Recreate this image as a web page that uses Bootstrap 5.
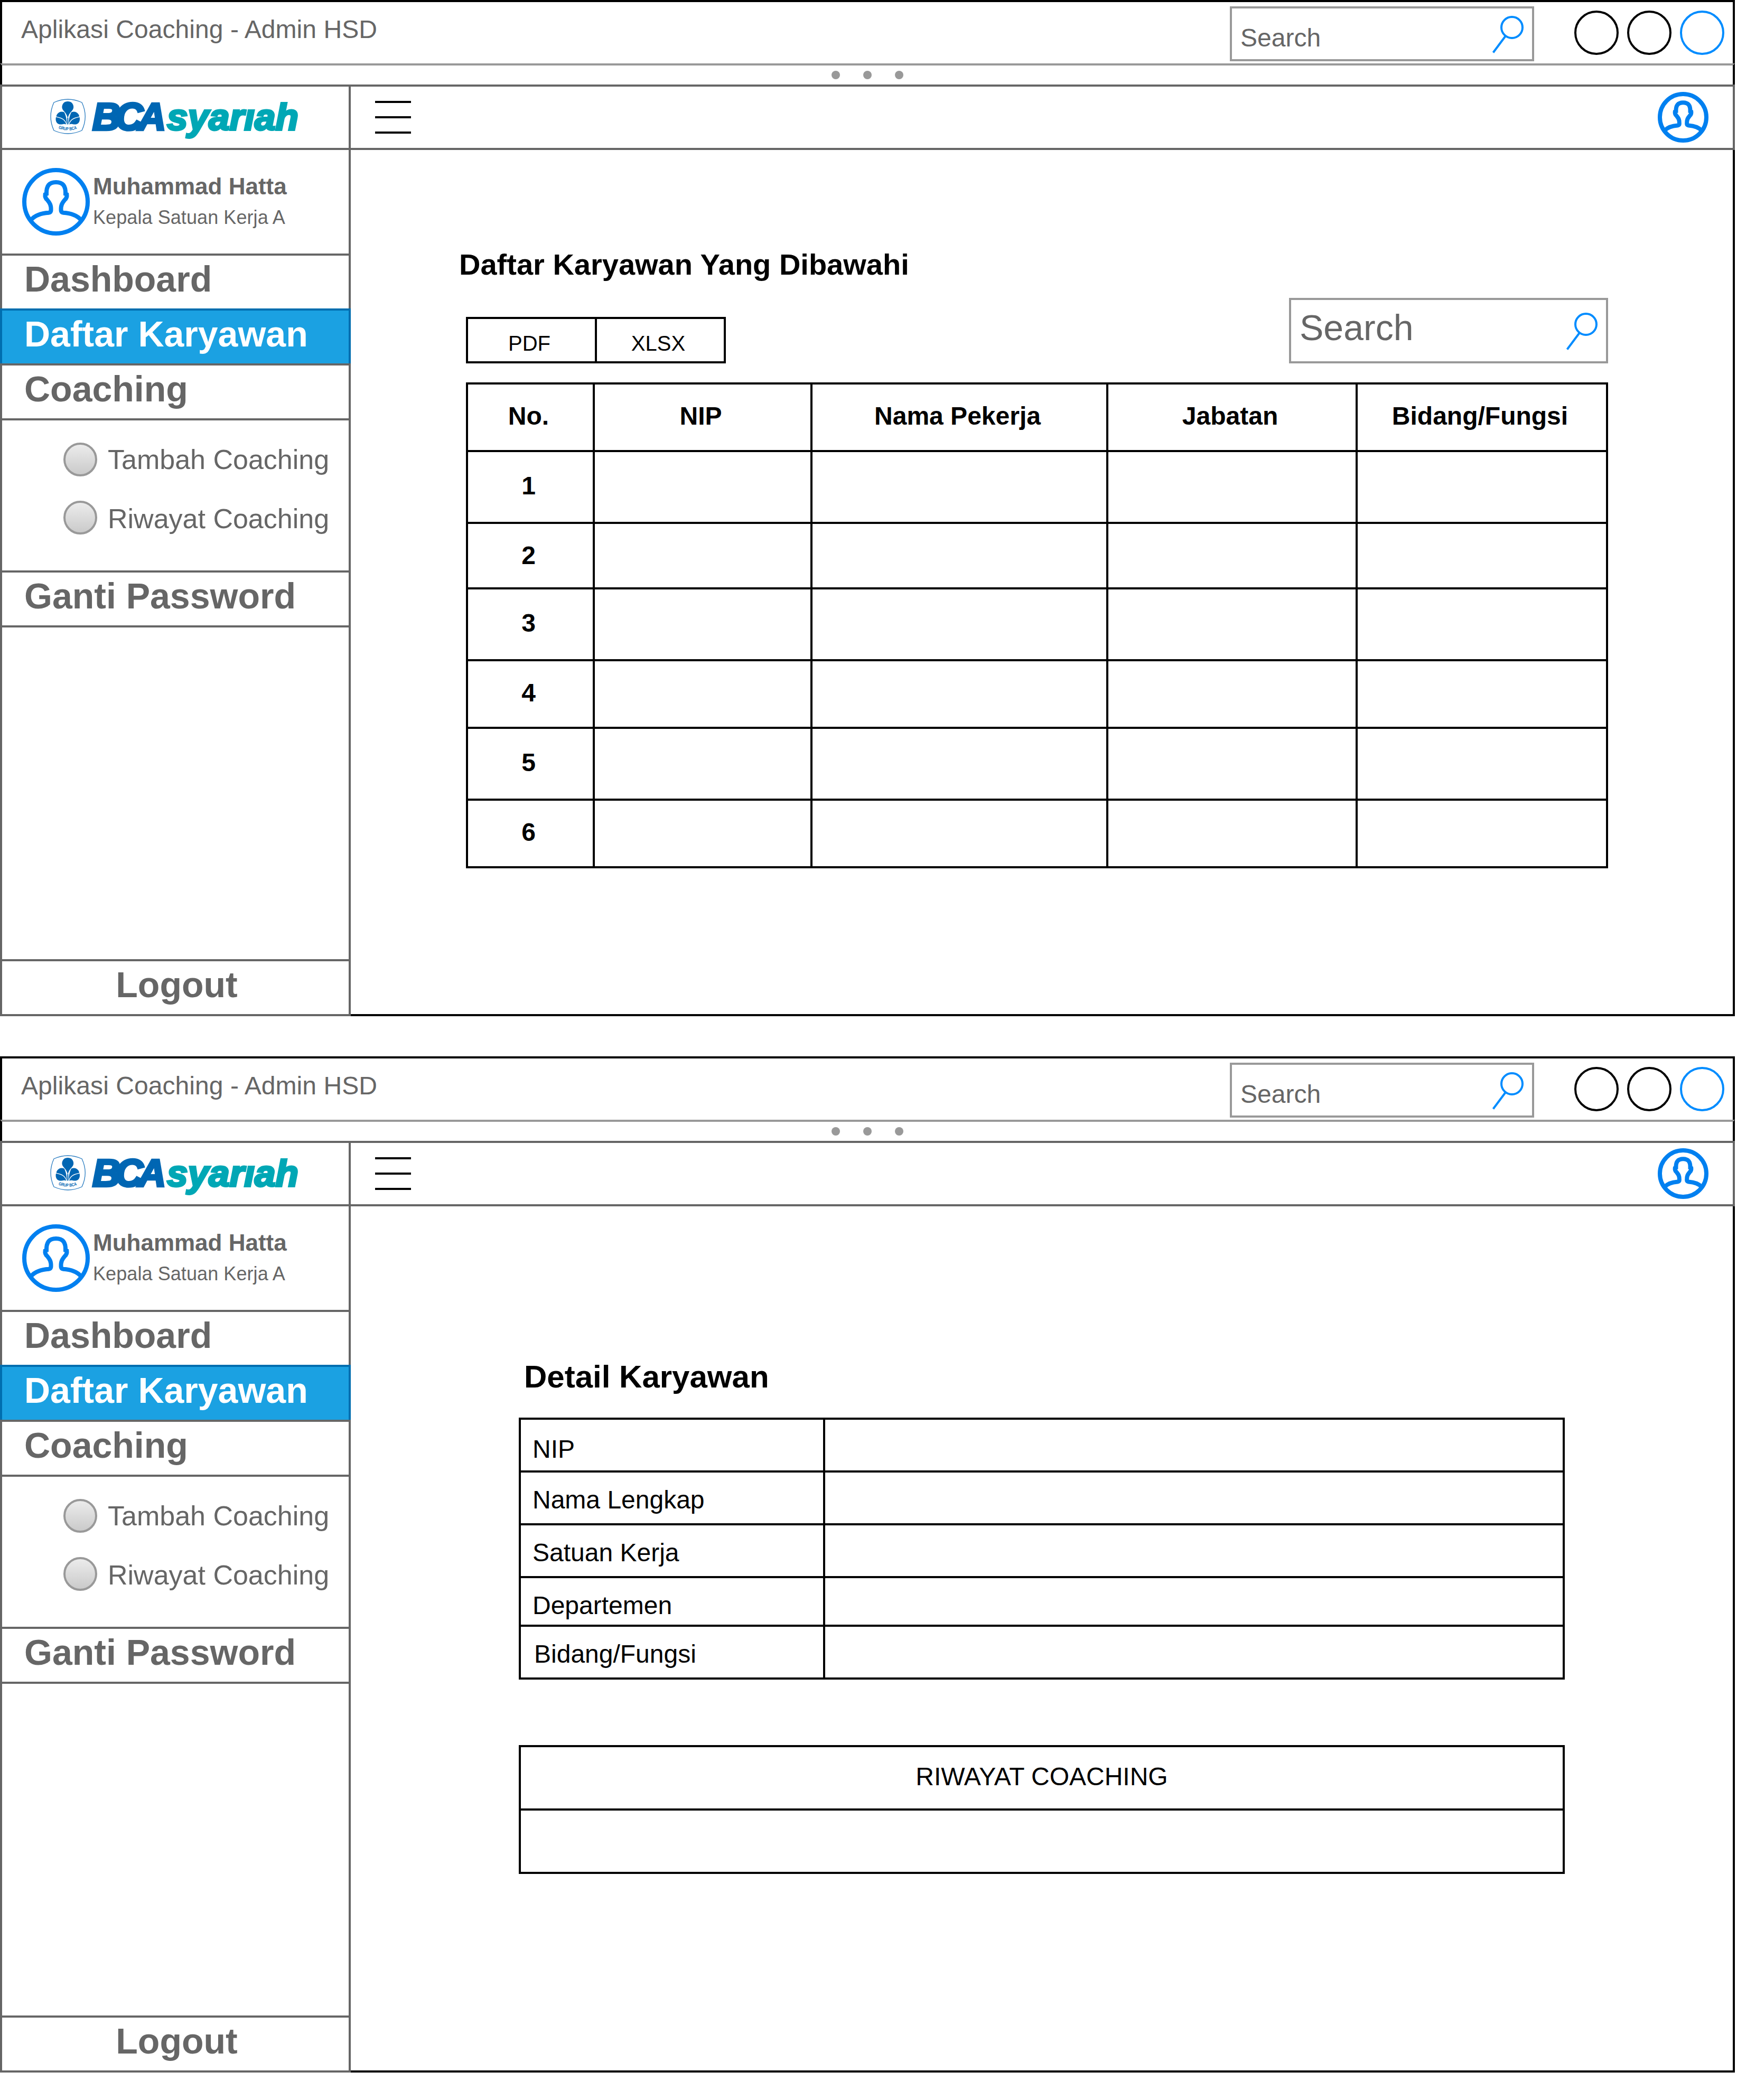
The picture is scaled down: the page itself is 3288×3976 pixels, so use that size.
<!DOCTYPE html>
<html lang="id">
<head>
<meta charset="utf-8">
<meta name="viewport" content="width=device-width, initial-scale=1">
<title>Aplikasi Coaching - Admin HSD</title>
<link href="https://cdn.jsdelivr.net/npm/bootstrap@5.3.0/dist/css/bootstrap.min.css" rel="stylesheet">
<style>
  :root { --ink: #666; --line: #999; --sky: #008cff; }
  html, body { background: #fff; overflow: hidden; }
  body { font-family: "Liberation Sans", Arial, sans-serif; color: #000; line-height: 1; width: 3288px; height: 3976px; }
  svg { display: block; flex: none; }

  .app-window { width: 3284px; height: 1924px; }
  .app-window + .app-window { margin-top: 76px; }

  /* title bar */
  .title-bar { height: 120px; border: 4px solid #000; border-bottom: 0; color: var(--ink); }
  .title-text { font-size: 48px; line-height: 55px; margin: 24px 0 0 36px; letter-spacing: .06px; }
  .grip-bar { height: 40px; border: 4px solid #000; border-top-color: var(--line); border-bottom: 0; gap: 44px; }
  .grip-dot { width: 16px; height: 16px; background: var(--line); }
  .find-box { border: 4px solid var(--line); color: var(--ink); background: #fff; }
  .find-top { width: 576px; height: 104px; margin: 8px 76px 0 0; font-size: 48px; }
  .find-top span { line-height: 55px; margin: 28px 0 0 16px; }
  .find-top svg { margin: 12px 14px 0 auto; }
  .win-dots { gap: 16px; margin: 16px 16px 0 0; }
  .win-dot { width: 84px; height: 84px; border: 4px solid #000; }
  .win-dot.is-blue { border-color: var(--sky); }

  /* sidebar */
  .side { width: 664px; height: 1764px; color: var(--ink); flex: none; }
  .side > * { border: 4px solid var(--ink); border-bottom: 0; flex: none; }
  .side-brand { height: 120px; }
  .side-user { height: 200px; padding: 34px 0 0 38px; }
  .user-name { font-size: 44px; line-height: 50px; margin-top: 10px; font-weight: 700; }
  .user-role { font-size: 36px; line-height: 43px; margin-top: 12px; letter-spacing: .08px; }
  .user-info { margin-left: 6px; white-space: nowrap; }
  .side-link { height: 104px; padding-left: 42px; font-size: 68px; line-height: 88px; font-weight: 700; color: var(--ink); text-decoration: none; display: block; }
  .side-link.is-active { background: #1ba1e2; border-color: #006eaf; color: #fff; }
  .side-sub { height: 288px; padding: 42px 0 0 116px; font-size: 52px; }
  .sub-row { height: 64px; gap: 20px; line-height: 64px; white-space: nowrap; }
  .sub-row + .sub-row { margin-top: 46px; line-height: 68px; }
  .sub-knob { width: 64px; height: 64px; border: 4px solid var(--line); background: linear-gradient(#eee, #c8c8c8) border-box; flex: none; }
  .side > .side-logout { height: 108px; padding-left: 5px; border-bottom: 4px solid var(--ink); text-align: center; }

  /* main column */
  .main-head { height: 124px; border: 4px solid var(--ink); border-left: 0; padding: 0 46px 0 46px; }
  .main-head .burger { margin-top: 27px; }
  .main-head .avatar { margin-top: 10px; }
  .main-body { border-right: 4px solid #000; border-bottom: 4px solid #000; }

  .list-area { padding: 183px 0 0 205px; }
  .list-title { font-size: 56px; line-height: 68px; font-weight: 700; margin: 0; }
  .list-block { width: 2162px; margin: 29px 0 0 13px; }
  .export-btn { height: 88px; width: 248px; border: 4px solid #000; border-radius: 0; background: none; font-size: 40px; line-height: 92px; padding: 0 8px 0 0; color: #000; text-align: center; }
  .export-btn + .export-btn { width: 244px; border-left: 0; }
  .find-list { width: 604px; height: 124px; font-size: 68px; line-height: 104px; }
  .find-list span { margin-left: 16px; }
  .find-list svg { margin: 22px 14px 0 auto; }

  .sheet { table-layout: fixed; border-collapse: separate; border-spacing: 0; border: 4px solid #000; border-right: 0; border-bottom: 0; margin: 0; color: #000; font-size: 48px; line-height: 55px; }
  .sheet > :not(caption) > tr > * { border: 0 solid #000; border-right-width: 4px; border-bottom-width: 4px; padding: 0 7px 6px 0; box-shadow: none; background: none; color: #000; vertical-align: middle; text-align: center; white-space: nowrap; }
  .sheet-list { margin-top: 36px; width: 2162px; }
  .h92 { height: 92px; } .h100 { height: 100px; } .h120 { height: 120px; }
  .h124 { height: 124px; } .h128 { height: 128px; } .h136 { height: 136px; }
  .sheet > tbody > tr.h124 > th { padding-bottom: 2px; }

  .detail-area { padding: 287px 0 0 318px; }
  .detail-title { font-size: 60px; line-height: 72px; font-weight: 700; margin: 0 0 0 10px; }
  .sheet-detail { width: 1980px; margin-top: 41px; }
  .sheet-detail > tbody > tr > th { text-align: left; font-weight: 400; vertical-align: top; padding: 24px 0 0 22px !important; }
  .sheet-detail > tbody > tr:first-child > th { padding-top: 28px !important; }
  .sheet-detail > tbody > tr:last-child > th { padding-left: 25px !important; }
  .sheet-history { width: 1980px; margin-top: 124px; }
  .sheet-history > tbody > tr > td { padding-right: 0; }
</style>
<script src="https://cdn.jsdelivr.net/npm/bootstrap@5.3.0/dist/js/bootstrap.bundle.min.js"></script>
</head>
<body>

<svg width="0" height="0" class="position-absolute" aria-hidden="true">
  <defs>
    <symbol id="lens" viewBox="0 0 64 76">
      <g fill="none" stroke="#008cff" stroke-width="4"><circle cx="40" cy="24" r="20"/><path d="M28 40L4.5 71.5"/></g>
    </symbol>
    <symbol id="person" viewBox="0 0 128 128">
      <path fill="none" stroke="#0080f0" d="M17 98C25 89 37 85.500 50 84.700Q54.500 84 54.500 80C55 70 52 66 47.500 60.500C43.500 57 43 54 43.600 50L46 49C45.500 34 51 27 64 27S82.500 34 82 49L84.400 50C85 54 84.500 57 80.500 60.500C76 66 73 70 73.500 80Q73.500 84 78 84.700C91 85.500 103 89 111 98"/>
    </symbol>
    <symbol id="emblem" viewBox="0 0 68 68">
      <path d="M7 7Q33.500-5 60 7Q72.500 33.500 60 60Q33.500 72 7 60Q-5 33.500 7 7Z" fill="#fff" stroke="#2a7cc0" stroke-width="1.300"/>
      <g fill="#0066b3">
        <path d="M33.300 5A10.500 10.500 0 0 1 41 23C37 27 34.500 31 33.300 37C32 31 29.500 27 25.600 23A10.500 10.500 0 0 1 33.300 5Z"/>
        <path d="M31.500 48C31.500 38 29 30 26.500 25.500A10.600 10.600 0 0 0 11.500 33.500C18 35.500 28 36 31.500 48Z"/>
        <path d="M35.100 48C35.100 38 37.600 30 40.100 25.500A10.600 10.600 0 0 1 55.200 33.500C48.500 35.500 38.600 36 35.100 48Z"/>
        <path d="M11 34.800C19 36.800 27 38 30.500 48.700C27 46.500 23 49 18 48.500C11.500 47.500 9.500 41 11 34.800Z"/>
        <path d="M55.600 34.800C47.600 36.800 39.600 38 36.100 48.700C39.600 46.500 43.600 49 48.600 48.500C55 47.500 57 41 55.600 34.800Z"/>
        <path d="M32.300 36H34.300V48.500H32.300Z"/>
      </g>
    </symbol>
    <path id="emblemArc" d="M110.500 243.500Q128.300 250 147 243.500"/>
  </defs>
</svg>

<!-- Daftar Karyawan -->
<section class="app-window d-flex flex-column">
  <header class="title-bar d-flex align-items-start">
    <div class="title-text me-auto">Aplikasi Coaching - Admin HSD</div>
    <div class="find-box find-top d-flex align-items-start"><span>Search</span><svg width="64" height="76"><use href="#lens"/></svg></div>
    <div class="win-dots d-flex"><i class="win-dot rounded-circle"></i><i class="win-dot rounded-circle"></i><i class="win-dot is-blue rounded-circle"></i></div>
  </header>
  <div class="grip-bar d-flex justify-content-center align-items-center"><i class="grip-dot rounded-circle"></i><i class="grip-dot rounded-circle"></i><i class="grip-dot rounded-circle"></i></div>
  <div class="d-flex">
    <aside class="side d-flex flex-column">
      <div class="side-brand">
        <svg width="656" height="116" viewBox="4 164 656 116" font-family="Liberation Sans, Arial, sans-serif" font-weight="700">
          <use href="#emblem" x="95" y="187" width="68" height="68"/>
          <text font-size="8.500" fill="#0066b3"><textPath href="#emblemArc" textLength="36" lengthAdjust="spacingAndGlyphs">GRUP BCA</textPath></text>
          <text x="175" y="245.500" font-size="73" font-style="italic" fill="#0066b3" stroke="#0066b3" stroke-width="4.500" letter-spacing="-9.500">BCA</text>
          <text x="316" y="246" font-size="70" font-style="italic" fill="#00a7b5" stroke="#00a7b5" stroke-width="3.800" textLength="249" lengthAdjust="spacingAndGlyphs">syarıah</text>
        </svg>
      </div>
      <div class="side-user d-flex align-items-start">
        <svg width="128" height="128" viewBox="0 0 128 128" stroke-width="8"><circle cx="64" cy="64" r="60" fill="none" stroke="#0080f0"/><use href="#person" width="128" height="128"/></svg>
        <div class="user-info"><div class="user-name">Muhammad Hatta</div><div class="user-role">Kepala Satuan Kerja A</div></div>
      </div>
      <a class="side-link">Dashboard</a>
      <a class="side-link is-active">Daftar Karyawan</a>
      <a class="side-link">Coaching</a>
      <div class="side-sub">
        <div class="sub-row d-flex align-items-start"><i class="sub-knob rounded-circle"></i><span>Tambah Coaching</span></div>
        <div class="sub-row d-flex align-items-start"><i class="sub-knob rounded-circle"></i><span>Riwayat Coaching</span></div>
      </div>
      <a class="side-link">Ganti Password</a>
      <div class="flex-grow-1"></div>
      <a class="side-link side-logout">Logout</a>
    </aside>
    <main class="flex-grow-1 d-flex flex-column">
      <div class="main-head d-flex justify-content-between align-items-start">
        <svg class="burger" width="68" height="62" viewBox="0 0 68 62"><path d="M0 0H68V4H0ZM0 29H68V33H0ZM0 58H68V62H0Z"/></svg>
        <svg class="avatar" width="96" height="96" viewBox="0 0 128 128" stroke-width="10.600"><circle cx="64" cy="64" r="58.700" fill="none" stroke="#0080f0"/><use href="#person" width="128" height="128"/></svg>
      </div>
      <div class="main-body list-area flex-grow-1">
        <h1 class="list-title">Daftar Karyawan Yang Dibawahi</h1>
        <div class="list-block">
          <div class="d-flex justify-content-between align-items-end">
            <div class="d-flex"><button class="export-btn">PDF</button><button class="export-btn">XLSX</button></div>
            <div class="find-box find-list d-flex align-items-start"><span>Search</span><svg width="64" height="76"><use href="#lens"/></svg></div>
          </div>
          <table class="table sheet sheet-list">
            <colgroup><col style="width:240px"><col style="width:412px"><col style="width:560px"><col style="width:472px"><col style="width:474px"></colgroup>
            <thead><tr class="h128"><th>No.</th><th>NIP</th><th>Nama Pekerja</th><th>Jabatan</th><th>Bidang/Fungsi</th></tr></thead>
            <tbody>
              <tr class="h136"><th>1</th><td></td><td></td><td></td><td></td></tr>
              <tr class="h124"><th>2</th><td></td><td></td><td></td><td></td></tr>
              <tr class="h136"><th>3</th><td></td><td></td><td></td><td></td></tr>
              <tr class="h128"><th>4</th><td></td><td></td><td></td><td></td></tr>
              <tr class="h136"><th>5</th><td></td><td></td><td></td><td></td></tr>
              <tr class="h128"><th>6</th><td></td><td></td><td></td><td></td></tr>
            </tbody>
          </table>
        </div>
      </div>
    </main>
  </div>
</section>

<!-- Detail Karyawan -->
<section class="app-window d-flex flex-column">
  <header class="title-bar d-flex align-items-start">
    <div class="title-text me-auto">Aplikasi Coaching - Admin HSD</div>
    <div class="find-box find-top d-flex align-items-start"><span>Search</span><svg width="64" height="76"><use href="#lens"/></svg></div>
    <div class="win-dots d-flex"><i class="win-dot rounded-circle"></i><i class="win-dot rounded-circle"></i><i class="win-dot is-blue rounded-circle"></i></div>
  </header>
  <div class="grip-bar d-flex justify-content-center align-items-center"><i class="grip-dot rounded-circle"></i><i class="grip-dot rounded-circle"></i><i class="grip-dot rounded-circle"></i></div>
  <div class="d-flex">
    <aside class="side d-flex flex-column">
      <div class="side-brand">
        <svg width="656" height="116" viewBox="4 164 656 116" font-family="Liberation Sans, Arial, sans-serif" font-weight="700">
          <use href="#emblem" x="95" y="187" width="68" height="68"/>
          <text font-size="8.500" fill="#0066b3"><textPath href="#emblemArc" textLength="36" lengthAdjust="spacingAndGlyphs">GRUP BCA</textPath></text>
          <text x="175" y="245.500" font-size="73" font-style="italic" fill="#0066b3" stroke="#0066b3" stroke-width="4.500" letter-spacing="-9.500">BCA</text>
          <text x="316" y="246" font-size="70" font-style="italic" fill="#00a7b5" stroke="#00a7b5" stroke-width="3.800" textLength="249" lengthAdjust="spacingAndGlyphs">syarıah</text>
        </svg>
      </div>
      <div class="side-user d-flex align-items-start">
        <svg width="128" height="128" viewBox="0 0 128 128" stroke-width="8"><circle cx="64" cy="64" r="60" fill="none" stroke="#0080f0"/><use href="#person" width="128" height="128"/></svg>
        <div class="user-info"><div class="user-name">Muhammad Hatta</div><div class="user-role">Kepala Satuan Kerja A</div></div>
      </div>
      <a class="side-link">Dashboard</a>
      <a class="side-link is-active">Daftar Karyawan</a>
      <a class="side-link">Coaching</a>
      <div class="side-sub">
        <div class="sub-row d-flex align-items-start"><i class="sub-knob rounded-circle"></i><span>Tambah Coaching</span></div>
        <div class="sub-row d-flex align-items-start"><i class="sub-knob rounded-circle"></i><span>Riwayat Coaching</span></div>
      </div>
      <a class="side-link">Ganti Password</a>
      <div class="flex-grow-1"></div>
      <a class="side-link side-logout">Logout</a>
    </aside>
    <main class="flex-grow-1 d-flex flex-column">
      <div class="main-head d-flex justify-content-between align-items-start">
        <svg class="burger" width="68" height="62" viewBox="0 0 68 62"><path d="M0 0H68V4H0ZM0 29H68V33H0ZM0 58H68V62H0Z"/></svg>
        <svg class="avatar" width="96" height="96" viewBox="0 0 128 128" stroke-width="10.600"><circle cx="64" cy="64" r="58.700" fill="none" stroke="#0080f0"/><use href="#person" width="128" height="128"/></svg>
      </div>
      <div class="main-body detail-area flex-grow-1">
        <h1 class="detail-title">Detail Karyawan</h1>
        <table class="table sheet sheet-detail">
          <colgroup><col style="width:576px"><col style="width:1400px"></colgroup>
          <tbody>
            <tr class="h100"><th>NIP</th><td></td></tr>
            <tr class="h100"><th>Nama Lengkap</th><td></td></tr>
            <tr class="h100"><th>Satuan Kerja</th><td></td></tr>
            <tr class="h92"><th>Departemen</th><td></td></tr>
            <tr class="h100"><th>Bidang/Fungsi</th><td></td></tr>
          </tbody>
        </table>
        <table class="table sheet sheet-history">
          <tbody>
            <tr class="h120"><td>RIWAYAT COACHING</td></tr>
            <tr class="h120"><td></td></tr>
          </tbody>
        </table>
      </div>
    </main>
  </div>
</section>

</body>
</html>
